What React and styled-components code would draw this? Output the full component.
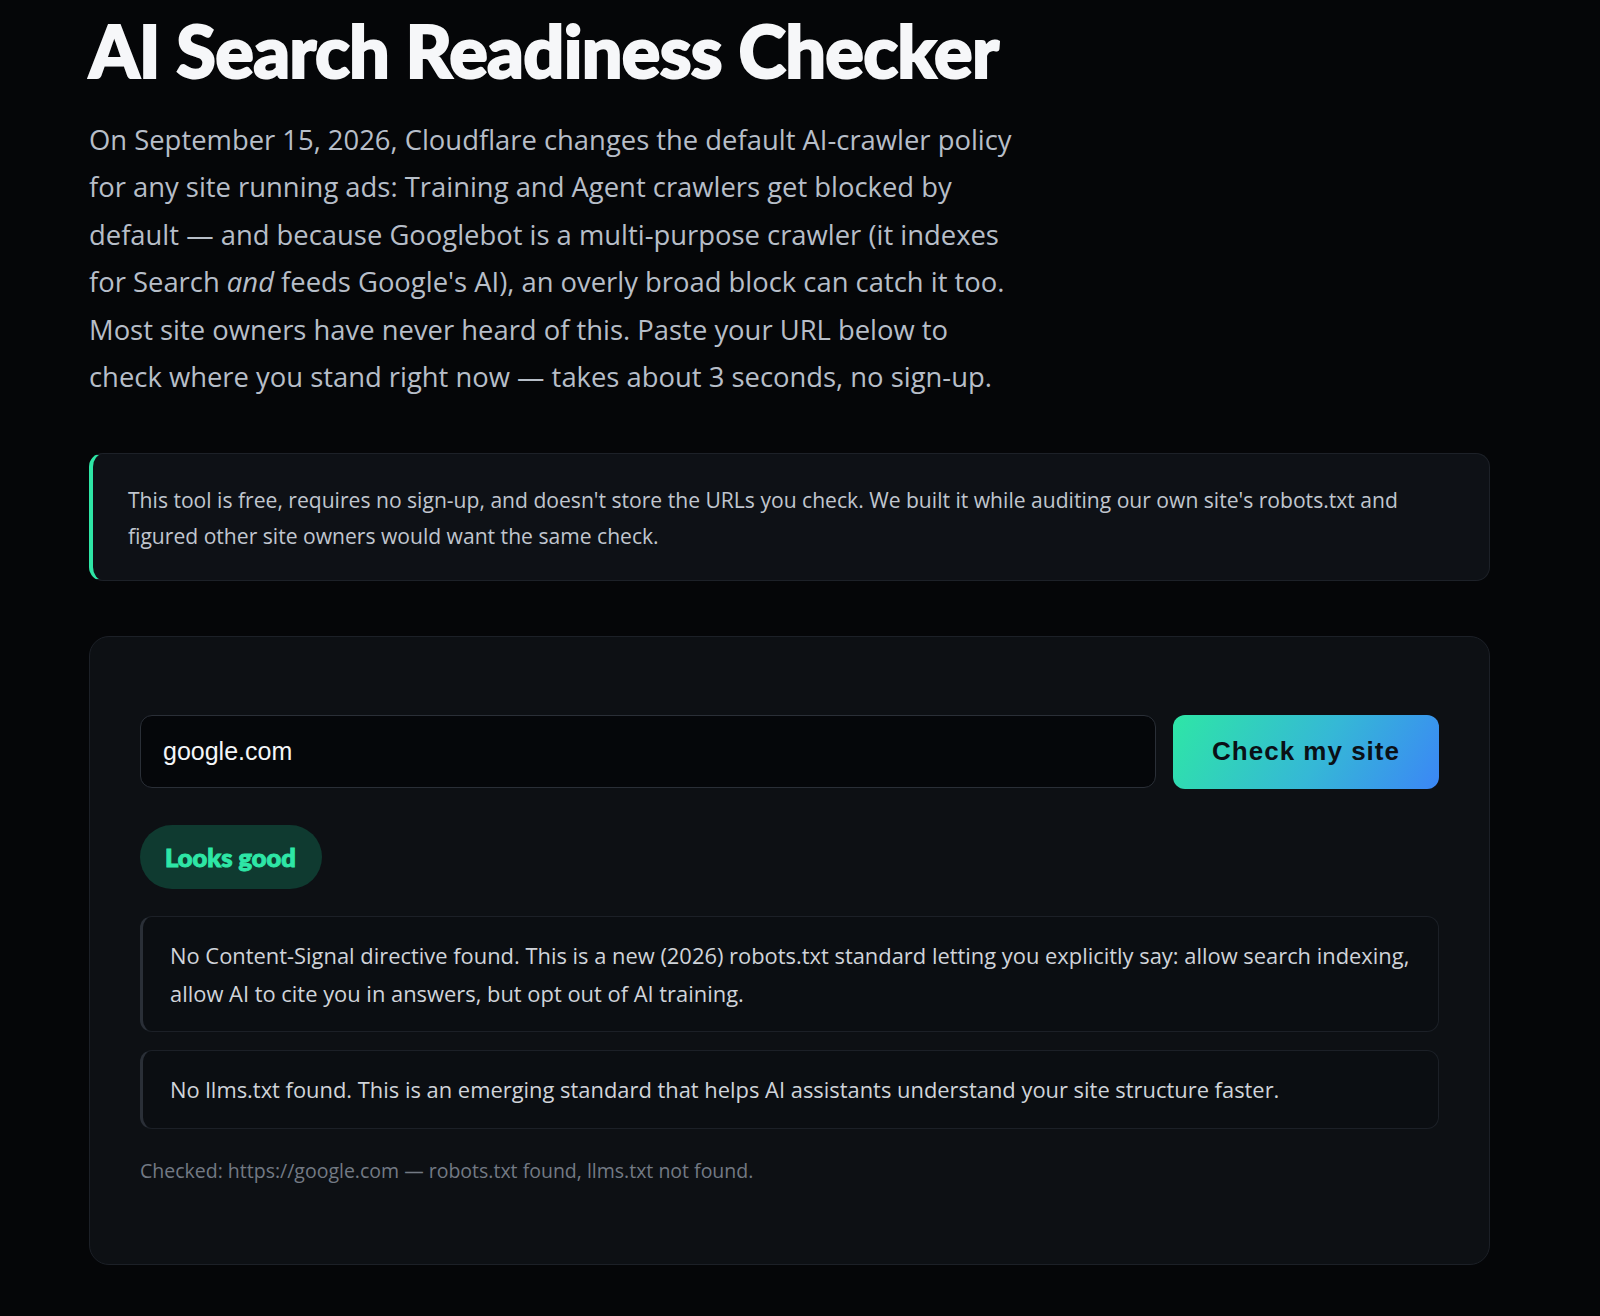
import styled, { createGlobalStyle } from "styled-components";

const GlobalStyle = createGlobalStyle`
  html, body {
    margin: 0;
    padding: 0;
    background: #050608;
  }
  body {
    font-family: "Open Sans", "Noto Sans", sans-serif;
    color: #c3c9d2;
  }
  * { box-sizing: border-box; }
`;

const Page = styled.div`
  min-height: 1316px;
  padding: 11px 0 0 89px;
`;

const Main = styled.main`
  width: 1401px;
`;

const Title = styled.h1`
  margin: 0;
  font-family: "Lato", "Inter", sans-serif;
  font-weight: 900;
  font-size: 72px;
  line-height: 79px;
  letter-spacing: -0.7px;
  color: #f6f7f9;
  -webkit-text-stroke: 2px #f6f7f9;
`;

// line breaks follow the source layout, the column is ~930px wide
const Intro = styled.p`
  margin: 26px 0 53px;
  max-width: 990px;
  font-size: 27.4px;
  line-height: 47.4px;
  color: #b7bec8;

  em {
    font-style: italic;
  }
`;

const Notice = styled.aside`
  background: #0e1116;
  border: 1px solid #1d2128;
  border-left: 4px solid #2ee6a6;
  border-radius: 14px;
  padding: 28px 40px 26px 35px;
  font-size: 21.1px;
  line-height: 35.7px;
  color: #c0c6cf;
  margin-bottom: 55px;
`;

const Card = styled.section`
  background: #0d1014;
  border: 1px solid #1c2027;
  border-radius: 20px;
  padding: 78px 50px 79px;
`;

const Form = styled.form`
  display: flex;
  gap: 17px;
  margin-bottom: 36px;
`;

const UrlInput = styled.input`
  flex: 1;
  height: 73px;
  padding: 0 22px;
  background: #05070a;
  border: 1.5px solid #2a2f37;
  border-radius: 12px;
  font-family: "Liberation Sans", Arial, sans-serif;
  font-size: 25px;
  color: #f4f6f8;
  outline: none;
`;

const CheckButton = styled.button`
  width: 266px;
  height: 74px;
  border: none;
  border-radius: 12px;
  background: linear-gradient(120deg, #2ee6a6 0%, #35b8d6 55%, #3b86f6 100%);
  font-family: "Liberation Sans", Arial, sans-serif;
  font-weight: 700;
  font-size: 26px;
  letter-spacing: 1px;
  color: #0a1016;
  cursor: pointer;
`;

const Status = styled.div`
  display: inline-flex;
  align-items: center;
  height: 64px;
  padding: 0 26px 0 25px;
  border-radius: 32px;
  background: #0f3a30;
  font-family: "Lato", "Inter", sans-serif;
  font-weight: 900;
  font-size: 25.5px;
  color: #2ee6a6;
  -webkit-text-stroke: 1px #2ee6a6;
  margin-bottom: 27px;
`;

const Findings = styled.div`
  display: flex;
  flex-direction: column;
  gap: 18px;
`;

const Finding = styled.div`
  background: #0b0e12;
  border: 1px solid #1c2027;
  border-left: 3px solid ${(p) => p.$accent || "#2a2f37"};
  border-radius: 12px;
  padding: 20px 20px 19px 27px;
  font-size: 21.9px;
  line-height: 37.8px;
  color: #d0d4da;
`;

const Footnote = styled.p`
  margin: 28px 0 0;
  font-size: 19.5px;
  line-height: 28px;
  color: #737a84;
`;

const findings = [
  "No Content-Signal directive found. This is a new (2026) robots.txt standard letting you explicitly say: allow search indexing, allow AI to cite you in answers, but opt out of AI training.",
  "No llms.txt found. This is an emerging standard that helps AI assistants understand your site structure faster.",
];

export default function App() {
  return (
    <>
      <GlobalStyle />
      <Page>
        <Main>
          <Title>AI Search Readiness Checker</Title>
          <Intro>
            On September 15, 2026, Cloudflare changes the default AI-crawler policy<br />
            for any site running ads: Training and Agent crawlers get blocked by<br />
            default — and because Googlebot is a multi-purpose crawler (it indexes<br />
            for Search <em>and</em> feeds Google's AI), an overly broad block can catch it too.<br />
            Most site owners have never heard of this. Paste your URL below to<br />
            check where you stand right now — takes about 3 seconds, no sign-up.
          </Intro>

          <Notice>
            This tool is free, requires no sign-up, and doesn't store the URLs you check. We built it
            while auditing our own site's robots.txt and figured other site owners would want the same check.
          </Notice>

          <Card>
            <Form onSubmit={(e) => e.preventDefault()}>
              <UrlInput type="text" defaultValue="google.com" aria-label="Website URL" />
              <CheckButton type="submit">Check my site</CheckButton>
            </Form>

            <Status>Looks good</Status>

            <Findings>
              {findings.map((text) => (
                <Finding key={text}>{text}</Finding>
              ))}
            </Findings>

            <Footnote>
              Checked: https://google.com — robots.txt found, llms.txt not found.
            </Footnote>
          </Card>
        </Main>
      </Page>
    </>
  );
}
